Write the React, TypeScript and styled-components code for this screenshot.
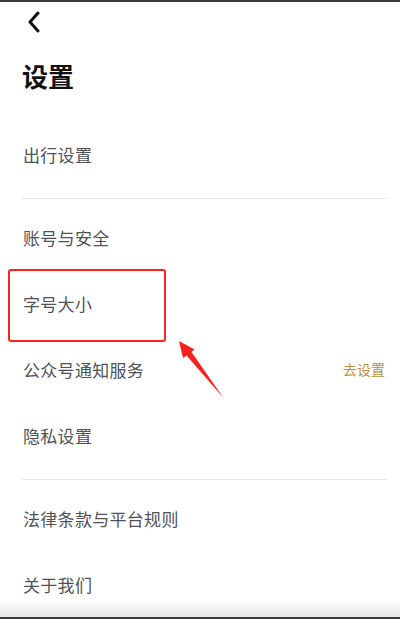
import React from "react";
import styled, { createGlobalStyle } from "styled-components";

const Global = createGlobalStyle`
  html, body { margin: 0; padding: 0; background: #fff; }
  body { font-family: "Noto Sans CJK SC", "Noto Sans", sans-serif; }
`;

const Page = styled.div`
  position: relative;
  width: 400px;
  height: 619px;
  overflow: hidden;
  background: #fff;
  display: flex;
  flex-direction: column;
`;

const TopEdge = styled.div`
  height: 2px;
  background: #3a3a3a;
  flex-shrink: 0;
`;

const NavBar = styled.div`
  height: 40px;
  display: flex;
  align-items: center;
  padding-left: 24px;
  flex-shrink: 0;
`;

const BackButton = styled.button`
  border: 0;
  background: none;
  padding: 0;
  width: 20px;
  height: 24px;
  display: flex;
  align-items: center;
  justify-content: center;
  cursor: pointer;
`;

const Title = styled.h1`
  margin: 16px 0 0;
  padding-left: 22px;
  font-size: 26px;
  line-height: 36px;
  font-weight: 700;
  color: #111;
`;

const List = styled.div`
  margin-top: 27px;
  display: flex;
  flex-direction: column;
`;

const Row = styled.div`
  position: relative;
  height: 66px;
  padding: 0 15px 0 23px;
  display: flex;
  align-items: center;
  justify-content: space-between;
  flex-shrink: 0;
`;

const Label = styled.span`
  font-size: 17px;
  color: #505257;
  letter-spacing: 0.3px;
`;

const Action = styled.span`
  font-size: 14px;
  color: #b8923a;
`;

const Divider = styled.div`
  height: 1px;
  margin: 11px 13px 5px 22px;
  background: #e6e6e6;
  flex-shrink: 0;
`;

const Highlight = styled.div`
  position: absolute;
  left: 8px;
  top: -1px;
  width: 154px;
  height: 69px;
  border: 2px solid #ff2222;
  border-radius: 3px;
  pointer-events: none;
`;

const ArrowMark = styled.svg`
  position: absolute;
  left: 170px;
  top: 335px;
  pointer-events: none;
`;

const BottomFade = styled.div`
  position: absolute;
  left: 0;
  right: 0;
  bottom: 0;
  height: 19px;
  background: linear-gradient(#ffffff00, #e9e9e9 88%);
  border-bottom: 2px solid #3a3a3a;
  box-sizing: border-box;
  pointer-events: none;
`;

type Item = { label: string; action?: string; marked?: boolean };

const groups: Item[][] = [
  [{ label: "出行设置" }],
  [
    { label: "账号与安全" },
    { label: "字号大小", marked: true },
    { label: "公众号通知服务", action: "去设置" },
    { label: "隐私设置" },
  ],
  [{ label: "法律条款与平台规则" }, { label: "关于我们" }],
];

export default function App() {
  return (
    <>
      <Global />
      <Page>
        <TopEdge />
        <NavBar>
          <BackButton aria-label="返回">
            <svg width="14" height="22" viewBox="0 0 14 22">
              <polyline
                points="11,2 3,11 11,20"
                fill="none"
                stroke="#111"
                strokeWidth="3"
                strokeLinecap="round"
                strokeLinejoin="round"
              />
            </svg>
          </BackButton>
        </NavBar>
        <Title>设置</Title>
        <List>
          {groups.map((items, gi) => (
            <React.Fragment key={gi}>
              {items.map((it) => (
                <Row key={it.label}>
                  <Label>{it.label}</Label>
                  {it.action && <Action>{it.action}</Action>}
                  {it.marked && <Highlight />}
                </Row>
              ))}
              {gi < groups.length - 1 && <Divider />}
            </React.Fragment>
          ))}
        </List>
        <ArrowMark width="60" height="70" viewBox="170 335 60 70">
          <polygon
            points="179,341 194.5,349.5 191.5,352 223.5,398 186.5,355.5 183,358"
            fill="#f5221e"
          />
        </ArrowMark>
        <BottomFade />
      </Page>
    </>
  );
}
